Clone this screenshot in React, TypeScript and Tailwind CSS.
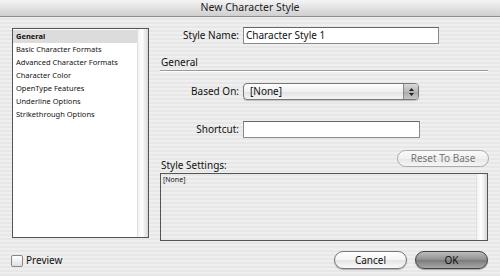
const items = [
  "General",
  "Basic Character Formats",
  "Advanced Character Formats",
  "Character Color",
  "OpenType Features",
  "Underline Options",
  "Strikethrough Options",
];

const stripes =
  "bg-[repeating-linear-gradient(180deg,#efefef_0px,#efefef_2px,#e7e7e7_2px,#e7e7e7_4px)]";

export default function App() {
  return (
    <div
      className={`w-[500px] h-[276px] overflow-hidden flex flex-col text-[#111] ${stripes}`}
      style={{ fontFamily: '"Noto Sans", "DejaVu Sans", sans-serif' }}
    >
      {/* title bar */}
      <div className="h-[17px] shrink-0 flex items-center justify-center text-[10.5px] text-[#222] bg-[linear-gradient(180deg,#f4f4f4,#cfcfcf)] border-b border-[#8d8d8d]">
        New Character Style
      </div>

      <div className="flex flex-1 pl-[12px] pr-[12px] pt-[11px]">
        {/* left list */}
        <div className="w-[137px] h-[210px] border border-[#555] bg-white flex shrink-0">
          <ul className="flex-1 pt-[1px]">
            {items.map((it, i) => (
              <li
                key={it}
                className={`h-[13px] leading-[13px] pl-[3px] text-[7.5px] ${
                  i === 0 ? "bg-[#dcdcdc] font-bold" : ""
                }`}
              >
                {it}
              </li>
            ))}
          </ul>
          <div className="w-[11px] bg-[linear-gradient(90deg,#f2f2f2,#ffffff_40%,#d8d8d8)] border-l border-[#e0e0e0]" />
        </div>

        {/* right side */}
        <div className="flex-1 ml-[11px] flex flex-col text-[10px]">
          <div className="flex items-center h-[17px] mt-[-1px]">
            <span className="w-[80px] text-right pr-[1px]">Style Name:</span>
            <div className="ml-[3px] w-[196px] h-[17px] bg-white border border-[#8a8a8a] border-t-[#666] flex items-center pl-[2px]">
              Character Style 1
            </div>
          </div>

          <div className="mt-[11px] pl-[1px] leading-[14px]">General</div>
          <div className="h-[2px] mt-[1px] w-[328px] border-t border-[#999] border-b border-b-white" />

          <div className="flex items-center h-[17px] mt-[11px]">
            <span className="w-[80px] text-right pr-[1px]">Based On:</span>
            <div className="ml-[3px] w-[176px] h-[17px] rounded-[4px] border border-[#777] bg-[linear-gradient(180deg,#ffffff,#f0f0f0_50%,#e2e2e2_51%,#f4f4f4)] flex items-center shadow-[0_1px_1px_rgba(0,0,0,0.2)]">
              <span className="flex-1 pl-[6px]">[None]</span>
              <div className="w-[15px] h-full border-l border-[#888] rounded-r-[3px] bg-[linear-gradient(180deg,#d8d8d8,#b8b8b8_50%,#a8a8a8_51%,#c8c8c8)] flex flex-col items-center justify-center gap-[2px]">
                <svg width="5" height="3" viewBox="0 0 5 3">
                  <path d="M0 3 L2.5 0 L5 3 Z" fill="#222" />
                </svg>
                <svg width="5" height="3" viewBox="0 0 5 3">
                  <path d="M0 0 L2.5 3 L5 0 Z" fill="#222" />
                </svg>
              </div>
            </div>
          </div>

          <div className="flex items-center h-[17px] mt-[21px]">
            <span className="w-[80px] text-right pr-[1px]">Shortcut:</span>
            <div className="ml-[3px] w-[177px] h-[17px] bg-white border border-[#8a8a8a] border-t-[#666]" />
          </div>

          <div className="flex items-end justify-between mt-[11px] h-[18px]">
            <span className="pl-[1px] leading-[12px] mb-[-4px]">Style Settings:</span>
            <div className="w-[92px] h-[17px] rounded-full border border-[#aaa] bg-[linear-gradient(180deg,#fbfbfb,#f0f0f0_50%,#e6e6e6_51%,#f6f6f6)] flex items-center justify-center text-[#777] mr-[-1px]">
              Reset To Base
            </div>
          </div>

          <div className="mt-[6px] w-[328px] h-[68px] border border-[#555] flex">
            <div className="flex-1 pl-[2px] pt-[1px] text-[7px]">[None]</div>
            <div className="w-[11px] bg-[linear-gradient(90deg,#f2f2f2,#ffffff_40%,#d8d8d8)] border-l border-[#e0e0e0]" />
          </div>
        </div>
      </div>

      {/* bottom row */}
      <div className="h-[39px] shrink-0 flex items-start pl-[11px] pr-[12px] pt-[10px] text-[10px]">
        <div className="flex items-center mt-[2px]">
          <div className="w-[12px] h-[12px] rounded-[2px] border border-[#888] bg-[linear-gradient(180deg,#ffffff,#e0e0e0)]" />
          <span className="ml-[3px]">Preview</span>
        </div>
        <div className="flex-1" />
        <div className="w-[73px] h-[18px] rounded-full border border-[#777] bg-[linear-gradient(180deg,#ffffff,#f4f4f4_50%,#e4e4e4_51%,#fafafa)] flex items-center justify-center shadow-[0_1px_1px_rgba(0,0,0,0.25)]">
          Cancel
        </div>
        <div className="ml-[8px] w-[73px] h-[18px] rounded-full border border-[#444] bg-[linear-gradient(180deg,#bdbdbd,#8e8e8e_50%,#7a7a7a_51%,#a8a8a8)] flex items-center justify-center text-[#111] shadow-[0_1px_1px_rgba(0,0,0,0.3)]">
          OK
        </div>
      </div>
    </div>
  );
}
